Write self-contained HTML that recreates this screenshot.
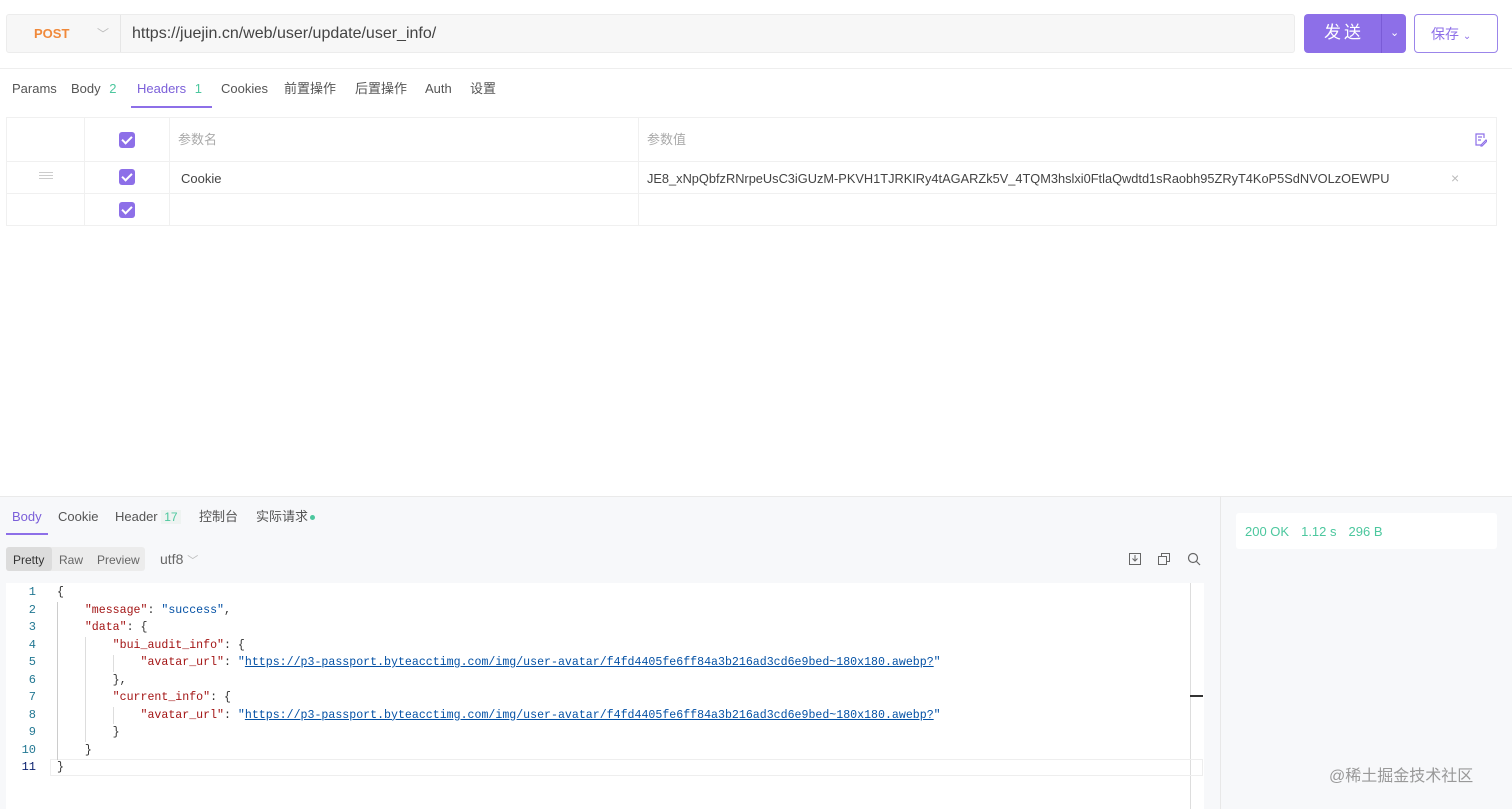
<!DOCTYPE html>
<html><head><meta charset="utf-8"><style>
*{box-sizing:border-box;margin:0;padding:0}
body{width:1512px;height:809px;overflow:hidden;background:#fff;font-family:"Liberation Sans","Noto Sans CJK SC",sans-serif;color:#333;position:relative;font-size:13px;line-height:16px}
.abs{position:absolute}
.url{left:6px;top:14px;width:1289px;height:39px;background:#f7f7f7;border:1px solid #ececec;border-radius:3px}
.send{left:1304px;top:14px;width:102px;height:39px;background:#8d6fe8;border-radius:4px;color:#fff;font-size:17px}
.save{left:1414px;top:14px;width:84px;height:39px;border:1px solid #9b85ea;border-radius:4px;color:#8d6fe8;font-size:14px}
.tabs span{position:absolute;top:81px;font-size:13px;color:#555;line-height:16px}
.grid{left:6px;top:117px;width:1491px;height:109px;border:1px solid #f0f0f0}
.hl{position:absolute;left:0;right:0;height:1px;background:#f0f0f0}
.vl{position:absolute;top:0;bottom:0;width:1px;background:#f0f0f0}
.cb{position:absolute;left:112px;width:16px;height:16px;background:#8d6fe8;border-radius:3px}
.cb:after{content:"";position:absolute;left:5px;top:2px;width:4px;height:8px;border:solid #fff;border-width:0 2px 2px 0;transform:rotate(45deg)}
.code{font-family:"Liberation Mono",monospace;font-size:11.6px;line-height:17.5px;white-space:pre}
.k{color:#a31515}.s{color:#0451a5}.u{color:#0451a5;text-decoration:underline}
.ln{position:absolute;left:6px;width:30px;text-align:right;color:#237893;font-family:"Liberation Mono",monospace;font-size:12px;line-height:17.5px}
</style></head><body>
<div class="abs url"></div>
<div class="abs" style="left:34px;top:26px;font-weight:bold;color:#f0893a;font-size:13px">POST</div>
<div class="abs" style="left:97px;top:26px;color:#bbb;font-size:12px">﹀</div>
<div class="abs" style="left:120px;top:15px;width:1px;height:37px;background:#e6e6e6"></div>
<div class="abs" style="left:132px;top:25px;font-size:16px;color:#444;line-height:18px">https://juejin.cn/web/user/update/user_info/</div>
<div class="abs send"><span class="abs" style="left:20px;top:9px;letter-spacing:3px;line-height:20px">发送</span><span class="abs" style="left:77px;top:0;width:1px;height:39px;background:#7a5bd6"></span><span class="abs" style="left:86px;top:11px;font-size:11px">⌄</span></div>
<div class="abs save"><span class="abs" style="left:16px;top:10px;line-height:18px">保存 <span style="font-size:10px">⌄</span></span></div>
<div class="abs" style="left:0;top:68px;width:1512px;height:1px;background:#eee"></div>
<div class="tabs">
<span style="left:12px">Params</span>
<span style="left:71px">Body <span style="position:static;color:#4cc79e;margin-left:5px">2</span></span>
<span style="left:137px;color:#7b5fd9">Headers <span style="position:static;color:#4cc79e;margin-left:5px">1</span></span>
<span style="left:221px">Cookies</span>
<span style="left:284px">前置操作</span>
<span style="left:355px">后置操作</span>
<span style="left:425px">Auth</span>
<span style="left:470px">设置</span>
</div>
<div class="abs" style="left:131px;top:106px;width:81px;height:2px;background:#8d6fe8"></div>
<div class="abs grid">
<div class="hl" style="top:43px"></div><div class="hl" style="top:75px"></div>
<div class="vl" style="left:77px"></div><div class="vl" style="left:162px"></div><div class="vl" style="left:631px"></div>
<div class="cb" style="top:14px"></div><div class="cb" style="top:51px"></div><div class="cb" style="top:84px"></div>
<div class="abs" style="left:32px;top:54px;width:14px;height:1px;background:#ccc;box-shadow:0 3px 0 #ccc,0 6px 0 #ccc"></div>
<div class="abs" style="left:171px;top:14px;color:#aaa;font-size:13px">参数名</div>
<div class="abs" style="left:174px;top:53px;color:#444;font-size:13px">Cookie</div>
<div class="abs" style="left:640px;top:14px;color:#aaa;font-size:13px">参数值</div>
<div class="abs" style="left:640px;top:53px;width:800px;overflow:hidden;white-space:nowrap;color:#444;font-size:12.8px">JE8_xNpQbfzRNrpeUsC3iGUzM-PKVH1TJRKIRy4tAGARZk5V_4TQM3hslxi0FtlaQwdtd1sRaobh95ZRyT4KoP5SdNVOLzOEWPU</div>
<div class="abs" style="left:1444px;top:52px;color:#bbb;font-size:14px">×</div>
<svg class="abs" style="left:1467px;top:14px" width="13" height="15" viewBox="0 0 13 15"><path d="M10 6V2H2v11h5M4 5h4M4 8h3M7 13l5-5 1 1-5 5H7z" fill="none" stroke="#8d6fe8" stroke-width="1.2"/></svg>
</div>
<div class="abs" style="left:0;top:496px;width:1512px;height:313px;background:#f7f8fa;border-top:1px solid #eaeaea"></div>
<div class="abs" style="left:1220px;top:496px;width:1px;height:313px;background:#e8e8e8"></div>
<div class="abs" style="left:12px;top:509px;color:#7b5fd9">Body</div>
<div class="abs" style="left:6px;top:533px;width:42px;height:2px;background:#8d6fe8"></div>
<div class="abs" style="left:58px;top:509px;color:#555">Cookie</div>
<div class="abs" style="left:115px;top:509px;color:#555">Header <span style="color:#4cc79e;background:#eef3f1;padding:0 3px;font-size:12px">17</span></div>
<div class="abs" style="left:199px;top:509px;color:#555">控制台</div>
<div class="abs" style="left:256px;top:509px;color:#555">实际请求<span style="display:inline-block;width:5px;height:5px;border-radius:50%;background:#4cc79e;margin-left:2px;vertical-align:middle"></span></div>
<div class="abs" style="left:6px;top:547px;width:139px;height:24px;background:#ececec;border-radius:3px"></div>
<div class="abs" style="left:6px;top:547px;width:46px;height:24px;background:#dcdcdc;border-radius:3px"></div>
<div class="abs" style="left:13px;top:552px;font-size:12px;color:#333">Pretty</div>
<div class="abs" style="left:59px;top:552px;font-size:12px;color:#666">Raw</div>
<div class="abs" style="left:97px;top:552px;font-size:12px;color:#666">Preview</div>
<div class="abs" style="left:160px;top:551px;font-size:14px;color:#666">utf8 <span style="color:#bbb;font-size:11px">﹀</span></div>
<svg class="abs" style="left:1128px;top:552px" width="14" height="14"><rect x="1.5" y="1.5" width="11" height="11" fill="none" stroke="#666"/><path d="M7 3v6M4.5 6.5 7 9l2.5-2.5" fill="none" stroke="#666"/></svg>
<svg class="abs" style="left:1157px;top:552px" width="14" height="14"><rect x="1.5" y="4.5" width="8" height="8" fill="none" stroke="#666"/><path d="M4.5 4.5V1.5h8v8h-3" fill="none" stroke="#666"/></svg>
<svg class="abs" style="left:1187px;top:552px" width="14" height="14"><circle cx="6" cy="6" r="4.5" fill="none" stroke="#666" stroke-width="1.2"/><path d="M9.5 9.5 13 13" stroke="#666" stroke-width="1.2"/></svg>
<div class="abs" style="left:6px;top:583px;width:1198px;height:226px;background:#fff"></div>
<div class="abs" style="left:1190px;top:583px;width:1px;height:226px;background:#ddd"></div>
<div class="abs" style="left:1190px;top:695px;width:13px;height:2px;background:#333"></div>
<div class="abs" style="left:50px;top:759px;width:1153px;height:17px;border:1px solid #eee"></div>
<div class="abs" style="left:57px;top:602px;width:1px;height:158px;background:#ccc"></div>
<div class="abs" style="left:85px;top:637px;width:1px;height:105px;background:#ddd"></div>
<div class="abs" style="left:113px;top:655px;width:1px;height:17px;background:#ddd"></div>
<div class="abs" style="left:113px;top:707px;width:1px;height:17px;background:#ddd"></div>
<div class="ln" style="top:584px">1<br>2<br>3<br>4<br>5<br>6<br>7<br>8<br>9<br>10<br><span style="color:#0b216f">11</span></div>
<div class="abs code" style="left:57px;top:584px">{
    <span class="k">"message"</span>: <span class="s">"success"</span>,
    <span class="k">"data"</span>: {
        <span class="k">"bui_audit_info"</span>: {
            <span class="k">"avatar_url"</span>: <span class="s">"</span><span class="u">https://p3-passport.byteacctimg.com/img/user-avatar/f4fd4405fe6ff84a3b216ad3cd6e9bed~180x180.awebp?</span><span class="s">"</span>
        },
        <span class="k">"current_info"</span>: {
            <span class="k">"avatar_url"</span>: <span class="s">"</span><span class="u">https://p3-passport.byteacctimg.com/img/user-avatar/f4fd4405fe6ff84a3b216ad3cd6e9bed~180x180.awebp?</span><span class="s">"</span>
        }
    }
}</div>
<div class="abs" style="left:1236px;top:513px;width:261px;height:36px;background:#fff;border-radius:3px"></div>
<div class="abs" style="left:1245px;top:524px;color:#4cc79e;font-size:13px">200 OK<span style="margin-left:12px">1.12 s</span><span style="margin-left:12px">296 B</span></div>
<div class="abs" style="left:1329px;top:767px;color:#999;font-size:16px;line-height:20px">@稀土掘金技术社区</div>
</body></html>
